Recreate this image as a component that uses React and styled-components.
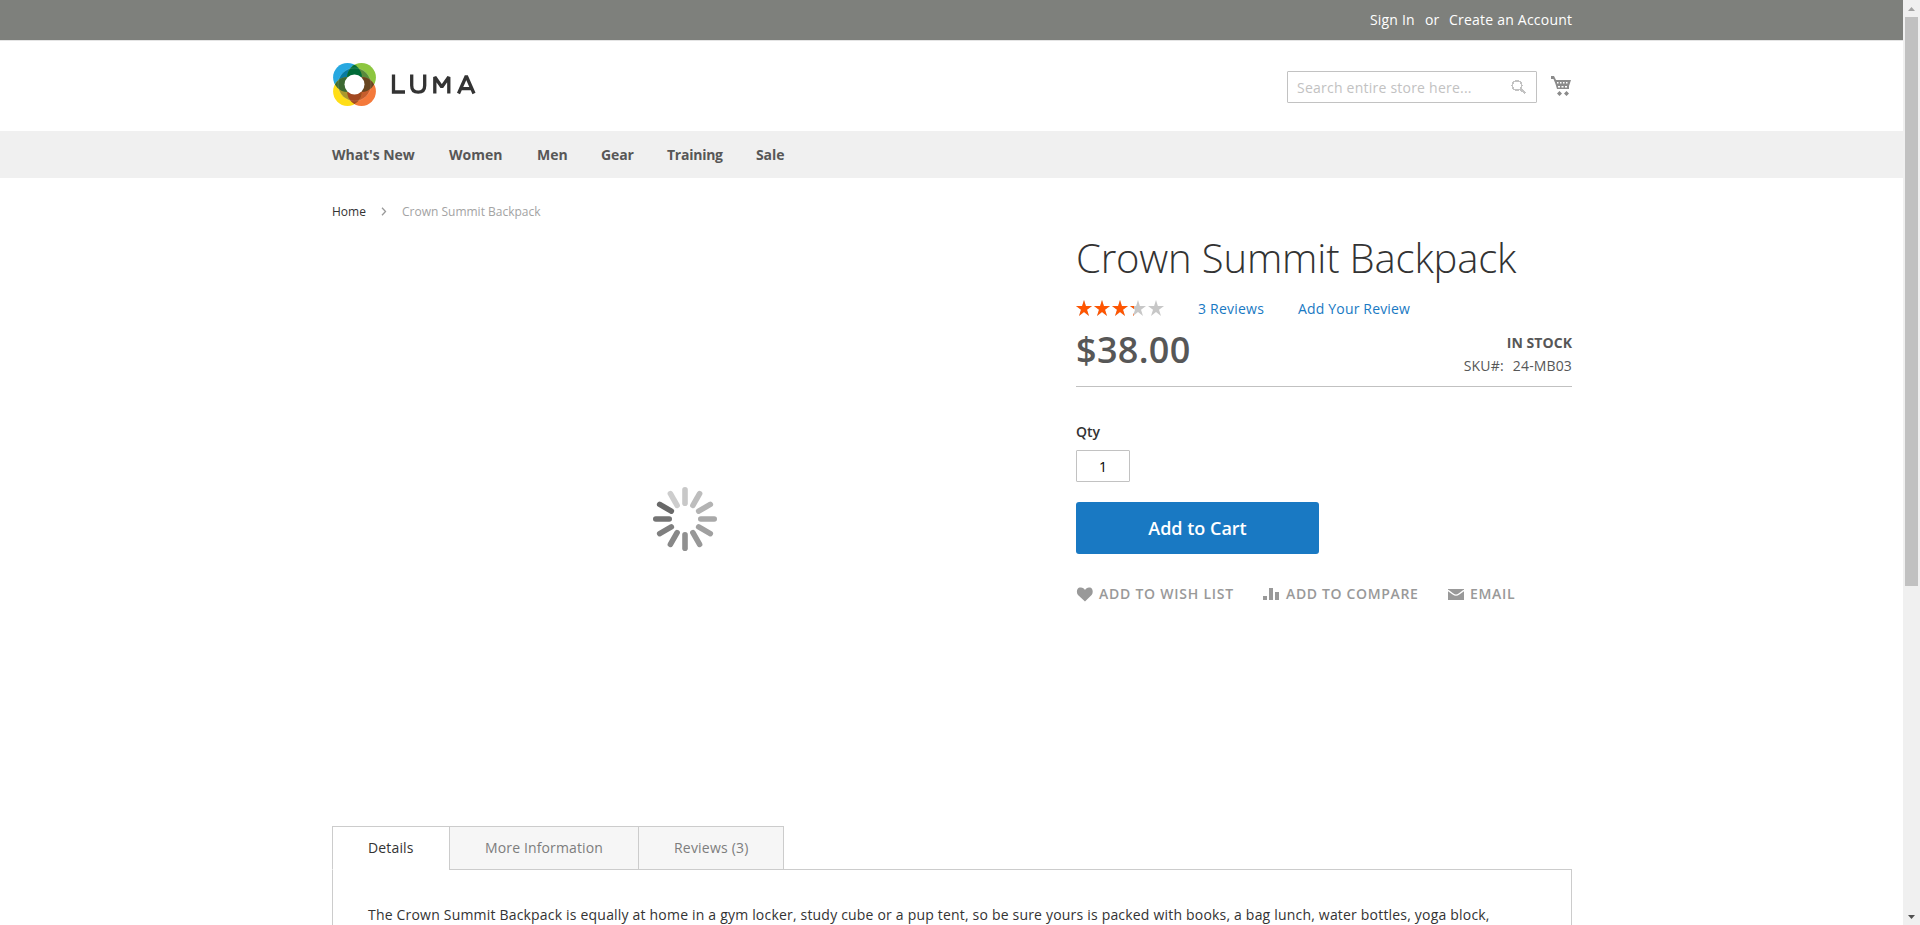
import React from 'react';
import styled, { createGlobalStyle } from 'styled-components';

const Global = createGlobalStyle`
  * { box-sizing: border-box; }
  body { margin: 0; overflow: hidden; background: #fff; }
  body, input, button { font-family: 'Open Sans', 'Noto Sans', sans-serif; font-size: 14px; }
  h1, p { margin: 0; }
  a { color: inherit; text-decoration: none; }
  svg { display: block; flex: none; }
`;

const Screen = styled.div`
  display: grid;
  grid-template-columns: 1fr 17px;
  width: 100%;
  height: 925px;
  overflow: hidden;
  color: #333;
`;
const Page = styled.div`
  height: 925px;
  overflow: hidden;
`;
const Container = styled.div`
  width: 1240px;
  margin: 0 auto 0 332px;
`;
const Label = styled.span`
  display: block;
  flex: none;
  width: ${(p) => (p.$w ? `${p.$w}px` : 'auto')};
  letter-spacing: ${(p) => p.$ls || 0}px;
  white-space: nowrap;
`;

const TopBar = styled.div`
  height: 41px;
  background: #7e807c;
  border-bottom: 1px solid #e4e4e4;
  color: #fff;
`;
const TopLinks = styled(Container)`
  display: flex;
  justify-content: flex-end;
  gap: 10px;
  line-height: 20px;
  padding-top: 10px;
`;
const Header = styled(Container)`
  display: flex;
  align-items: flex-start;
  height: 90px;
`;
const Logo = styled.a`
  display: block;
  margin: 21px auto 0 0;
`;
const SearchBox = styled.div`
  display: flex;
  align-items: center;
  justify-content: space-between;
  width: 250px;
  height: 32px;
  margin: 30px 14px 0 0;
  padding: 0 10px 0 9px;
  border: 1px solid #c2c2c2;
  border-radius: 1px;
  color: #c2c2c2;
`;
const CartLink = styled.a`
  margin: 34px 1px 0 0;
`;

const NavBar = styled.nav`
  height: 47px;
  background: #f0f0f0;
`;
const NavList = styled(Container)`
  display: flex;
  gap: 33px;
  line-height: 47px;
  font-weight: 700;
  color: #575757;
`;

const Crumbs = styled(Container)`
  display: flex;
  align-items: center;
  height: 17px;
  margin-top: 25px;
  font-size: 12px;
  color: #a3a3a3;
  svg { margin: 0 15px 0 14px; }
`;
const HomeLink = styled.a`
  color: #333;
`;

const Product = styled(Container)`
  display: flex;
  justify-content: space-between;
  height: 606px;
`;
const Gallery = styled.div`
  display: flex;
  justify-content: center;
  width: 706px;
  padding-top: 267px;
`;
const Info = styled.section`
  width: 496px;
`;
const Title = styled.h1`
  margin-top: 16px;
  height: 44px;
  line-height: 44px;
  font-size: 40px;
  font-weight: 300;
  white-space: nowrap;
  letter-spacing: ${(p) => p.$ls}px;
`;
const Rating = styled.div`
  display: flex;
  align-items: center;
  height: 20px;
  margin-top: 18px;
  color: #1979c3;
  svg { margin-right: 34px; }
`;
const PriceRow = styled.div`
  display: flex;
  justify-content: space-between;
  height: 69px;
  border-bottom: 1px solid #c1c1c1;
  color: #575757;
`;
const Price = styled.div`
  padding-top: 13px;
  font-size: 36px;
  line-height: 38px;
  font-weight: 600;
  letter-spacing: ${(p) => p.$ls}px;
`;
const StockInfo = styled.div`
  display: flex;
  flex-direction: column;
  align-items: flex-end;
  padding-top: 13px;
  line-height: 23px;
`;
const Stock = styled.strong`
  font-weight: 700;
  letter-spacing: ${(p) => p.$ls}px;
`;
const Sku = styled.div`
  display: flex;
  gap: 9px;
`;
const QtyLabel = styled.label`
  display: block;
  margin-top: 35px;
  line-height: 20px;
  font-weight: 600;
`;
const QtyInput = styled.input`
  display: block;
  width: 54px;
  height: 32px;
  margin-top: 8px;
  padding: 1px 0 0;
  border: 1px solid #c2c2c2;
  border-radius: 1px;
  text-align: center;
  color: #000;
`;
const CartButton = styled.button`
  display: block;
  width: 243px;
  height: 52px;
  margin-top: 20px;
  padding: 0;
  border: 0;
  border-radius: 3px;
  background: #1979c3;
  color: #fff;
  font-size: 18px;
  font-weight: 600;
`;
const Actions = styled.div`
  display: flex;
  margin-top: 30px;
  line-height: 20px;
  font-weight: 600;
  color: #999;
`;
const Action = styled.a`
  display: flex;
  align-items: center;
  gap: 6px;
  margin-right: 29px;
`;

const Tabs = styled(Container)`
  display: flex;
  position: relative;
  z-index: 1;
`;
const Tab = styled.a`
  width: ${(p) => p.$w}px;
  height: 44px;
  padding-left: 35px;
  line-height: 42px;
  border: 1px solid #ccc;
  border-bottom-color: ${(p) => (p.$active ? '#fff' : '#ccc')};
  margin-right: -1px;
  background: ${(p) => (p.$active ? '#fff' : '#f6f6f6')};
  color: ${(p) => (p.$active ? '#333' : '#7d7d7d')};
`;
const Panel = styled(Container)`
  height: 120px;
  margin-top: -1px;
  padding: 35px 35px 0;
  border: 1px solid #ccc;
  line-height: 20px;
`;

const Scrollbar = styled.div`
  display: flex;
  flex-direction: column;
  align-items: center;
  justify-content: space-between;
  height: 925px;
  background: #f0f0f0;
`;
const Thumb = styled.div`
  width: 13px;
  height: 569px;
  margin-bottom: auto;
  background: #c1c1c1;
`;
const ArrowBox = styled.div`
  display: flex;
  align-items: center;
  justify-content: center;
  height: 17px;
`;

const CIRCLES = [
  { cx: 14.5, cy: 14.5, fill: '#27a8e0' },
  { cx: 28.5, cy: 14.5, fill: '#8cc63f' },
  { cx: 28.5, cy: 28.5, fill: '#f4793b' },
  { cx: 14.5, cy: 28.5, fill: '#ffde17' },
];
const LumaLogo = () => (
  <svg width="146" height="46" viewBox="0 0 146 46">
    <g transform="translate(1 1)">
      {CIRCLES.map((c, i) => <circle key={i} {...c} r="14.4" />)}
      <clipPath id="c0"><circle cx="14.5" cy="14.5" r="14.4" /></clipPath>
      <clipPath id="c1"><circle cx="28.5" cy="14.5" r="14.4" /></clipPath>
      <clipPath id="c2"><circle cx="28.5" cy="28.5" r="14.4" /></clipPath>
      <clipPath id="c3"><circle cx="14.5" cy="28.5" r="14.4" /></clipPath>
      <clipPath id="ring"><circle cx="21.5" cy="21.5" r="16.5" /></clipPath>
      <g clipPath="url(#ring)">
        <circle cx="14.5" cy="14.5" r="14.4" fill="#087aa0" />
        <circle cx="28.5" cy="14.5" r="14.4" fill="#598b3b" />
        <circle cx="28.5" cy="28.5" r="14.4" fill="#c65d2c" />
        <circle cx="14.5" cy="28.5" r="14.4" fill="#aa982c" />
      </g>
      <g clipPath="url(#c1)"><circle cx="14.5" cy="14.5" r="14.4" fill="#006b38" /></g>
      <g clipPath="url(#c2)"><circle cx="28.5" cy="14.5" r="14.4" fill="#68451f" /></g>
      <g clipPath="url(#c3)"><circle cx="28.5" cy="28.5" r="14.4" fill="#a34820" /></g>
      <g clipPath="url(#c0)"><circle cx="14.5" cy="28.5" r="14.4" fill="#3c6932" /></g>
      <circle cx="21.5" cy="21.5" r="16.5" fill="none" stroke="#fff" strokeOpacity=".25" strokeWidth=".6" />
      <circle cx="21.5" cy="21.5" r="10" fill="#fff" />
    </g>
    <g fill="none" stroke="#333" strokeWidth="3.300">
      <path d="M61.5 12.5V30H73" />
      <path d="M79.700 12.500V23.500Q79.700 30.200 86.200 30.200T92.700 23.500V12.500" />
      <path d="M102.800 31.500V15L109.800 25L116.800 15V31.500" strokeLinejoin="bevel" />
      <path d="M126.500 31.500L134.300 14L142 31.500M129 26.700H139.500" strokeLinejoin="bevel" />
    </g>
  </svg>
);

const SearchIcon = () => (
  <svg width="15" height="14" viewBox="0 0 15 14" fill="none" stroke="#c2c2c2" shapeRendering="crispEdges">
    <circle cx="6" cy="5.500" r="4.700" strokeWidth="1.800" />
    <path d="M9.500 9L14.300 13.500" strokeWidth="2.300" />
  </svg>
);
const CartIcon = () => (
  <svg width="20" height="21" viewBox="0 0 20 21" fill="#8b8b8b">
    <path d="M0 1h3l2 4h15l-2 6v3H6L4.500 9 2.500 4H0z" />
    <path d="M6 7h1.500v1.500H6zm3 0h1.500v1.500H9zm3 0h1.500v1.500H12zm3 0h1.500v1.500H15zM7 11h2v1.500H7zm3.500 0h2v1.500h-2zm3.500 0h2v1.500h-2z" fill="#fff" />
    <path d="M8.500 16l2.500 2.500L8.500 21 6 18.500zM15.500 16l2.500 2.500-2.500 2.500-2.500-2.500z" />
  </svg>
);
const Chevron = () => (
  <svg width="7" height="9" viewBox="0 0 7 9" fill="none" stroke="#999" strokeWidth="1.300">
    <path d="M2 .8L5.500 4.500L2 8.200" />
  </svg>
);

const STAR = 'M8 0l1.900 6H16l-5 3.700L13 16l-5-3.900L3 16l2-6.300L0 6h6.100z';
const StarRow = ({ fill }) =>
  [0, 1, 2, 3, 4].map((i) => <path key={i} d={STAR} transform={`translate(${i * 18})`} fill={fill} />);
const Stars = () => (
  <svg width="88" height="16" viewBox="0 0 88 16">
    <StarRow fill="#c7c7c7" />
    <clipPath id="score"><rect width="58" height="16" /></clipPath>
    <g clipPath="url(#score)"><StarRow fill="#ff5501" /></g>
  </svg>
);

const SPOKES = ['#c8c8c8', '#bdbdbd', '#b3b3b3', '#a9a9a9', '#a0a0a0', '#989898', '#909090', '#888', '#7f7f7f', '#747474', '#686868', '#cdcdcd'];
const Spinner = () => (
  <svg width="64" height="64" viewBox="-32 -32 64 64">
    {SPOKES.map((c, i) => (
      <rect key={i} x="-2.800" y="-32" width="5.600" height="19" rx="2.800" fill={c} transform={`rotate(${i * 30})`} />
    ))}
  </svg>
);
const Heart = () => (
  <svg width="17" height="15" viewBox="0 0 17 15" fill="#999">
    <path d="M9 14.500L2 8C0 5.500.8 1.500 3.500.6 6 0 8 1 9 3 10 1 12 0 14.200.6c2.600.9 3.400 4.900 1.400 7.400z" />
  </svg>
);
const Bars = () => (
  <svg width="17" height="12" viewBox="0 0 17 12" fill="#999">
    <path d="M0 8h4v4H0zM6 0h4v12H6zM12 4h4v8h-4z" />
  </svg>
);
const Mail = () => (
  <svg width="16" height="12" viewBox="0 0 16 12">
    <path d="M0 1h16v11H0z" fill="#999" />
    <path d="M0 2.300L5 6Q8 8.300 11 6L16 2.300" fill="none" stroke="#fff" strokeWidth="1.400" />
  </svg>
);
const Arrow = ({ up }) => (
  <svg width="7" height="4" viewBox="0 0 7 4">
    <path d={up ? 'M0 4L3.500 0L7 4z' : 'M0 0h7L3.500 4z'} fill={up ? '#a3a3a3' : '#505050'} />
  </svg>
);

const NAV = [
  ["What's New", 84, -0.05], ['Women', 55, 0], ['Men', 31, 0], ['Gear', 33, -0.1], ['Training', 56, -0.25], ['Sale', 29, -0.1],
];

export default function App() {
  return (
    <Screen>
      <Global />
      <Page>
        <TopBar>
          <TopLinks>
            <Label as="a" $w={45} $ls={0.17}>Sign In</Label>
            <Label $w={14}>or</Label>
            <Label as="a" $w={123} $ls={0.22}>Create an Account</Label>
          </TopLinks>
        </TopBar>
        <Header>
          <Logo><LumaLogo /></Logo>
          <SearchBox><Label $ls={0.23}>Search entire store here...</Label><SearchIcon /></SearchBox>
          <CartLink><CartIcon /></CartLink>
        </Header>
        <NavBar>
          <NavList>
            {NAV.map(([name, w, ls]) => <Label as="a" key={name} $w={w} $ls={ls}>{name}</Label>)}
          </NavList>
        </NavBar>
        <Crumbs>
          <HomeLink><Label $w={34}>Home</Label></HomeLink>
          <Chevron />
          <Label>Crown Summit Backpack</Label>
        </Crumbs>
        <Product>
          <Gallery><Spinner /></Gallery>
          <Info>
            <Title $ls={-0.16}>Crown Summit Backpack</Title>
            <Rating>
              <Stars />
              <Label as="a" $w={100} $ls={0.22}>3 Reviews</Label>
              <Label as="a" $ls={0.17}>Add Your Review</Label>
            </Rating>
            <PriceRow>
              <Price $ls={0.3}>$38.00</Price>
              <StockInfo>
                <Stock $ls={0.06}>IN STOCK</Stock>
                <Sku><Label $ls={0.2}>SKU#:</Label><Label $ls={0.14}>24-MB03</Label></Sku>
              </StockInfo>
            </PriceRow>
            <QtyLabel>Qty</QtyLabel>
            <QtyInput defaultValue="1" />
            <CartButton>Add to Cart</CartButton>
            <Actions>
              <Action><Heart /><Label $w={135} $ls={0.76}>ADD TO WISH LIST</Label></Action>
              <Action><Bars /><Label $w={133} $ls={0.65}>ADD TO COMPARE</Label></Action>
              <Action><Mail /><Label $ls={0.7}>EMAIL</Label></Action>
            </Actions>
          </Info>
        </Product>
        <Tabs>
          <Tab $w={118} $active><Label $ls={0.15}>Details</Label></Tab>
          <Tab $w={190}><Label $ls={0.13}>More Information</Label></Tab>
          <Tab $w={146}><Label $ls={0.2}>Reviews (3)</Label></Tab>
        </Tabs>
        <Panel>
          <Label as="p" $ls={0.193}>
            The Crown Summit Backpack is equally at home in a gym locker, study cube or a pup tent, so be sure yours is packed with books, a bag lunch, water bottles, yoga block,
          </Label>
        </Panel>
      </Page>
      <Scrollbar>
        <ArrowBox><Arrow up /></ArrowBox>
        <Thumb />
        <ArrowBox><Arrow /></ArrowBox>
      </Scrollbar>
    </Screen>
  );
}
